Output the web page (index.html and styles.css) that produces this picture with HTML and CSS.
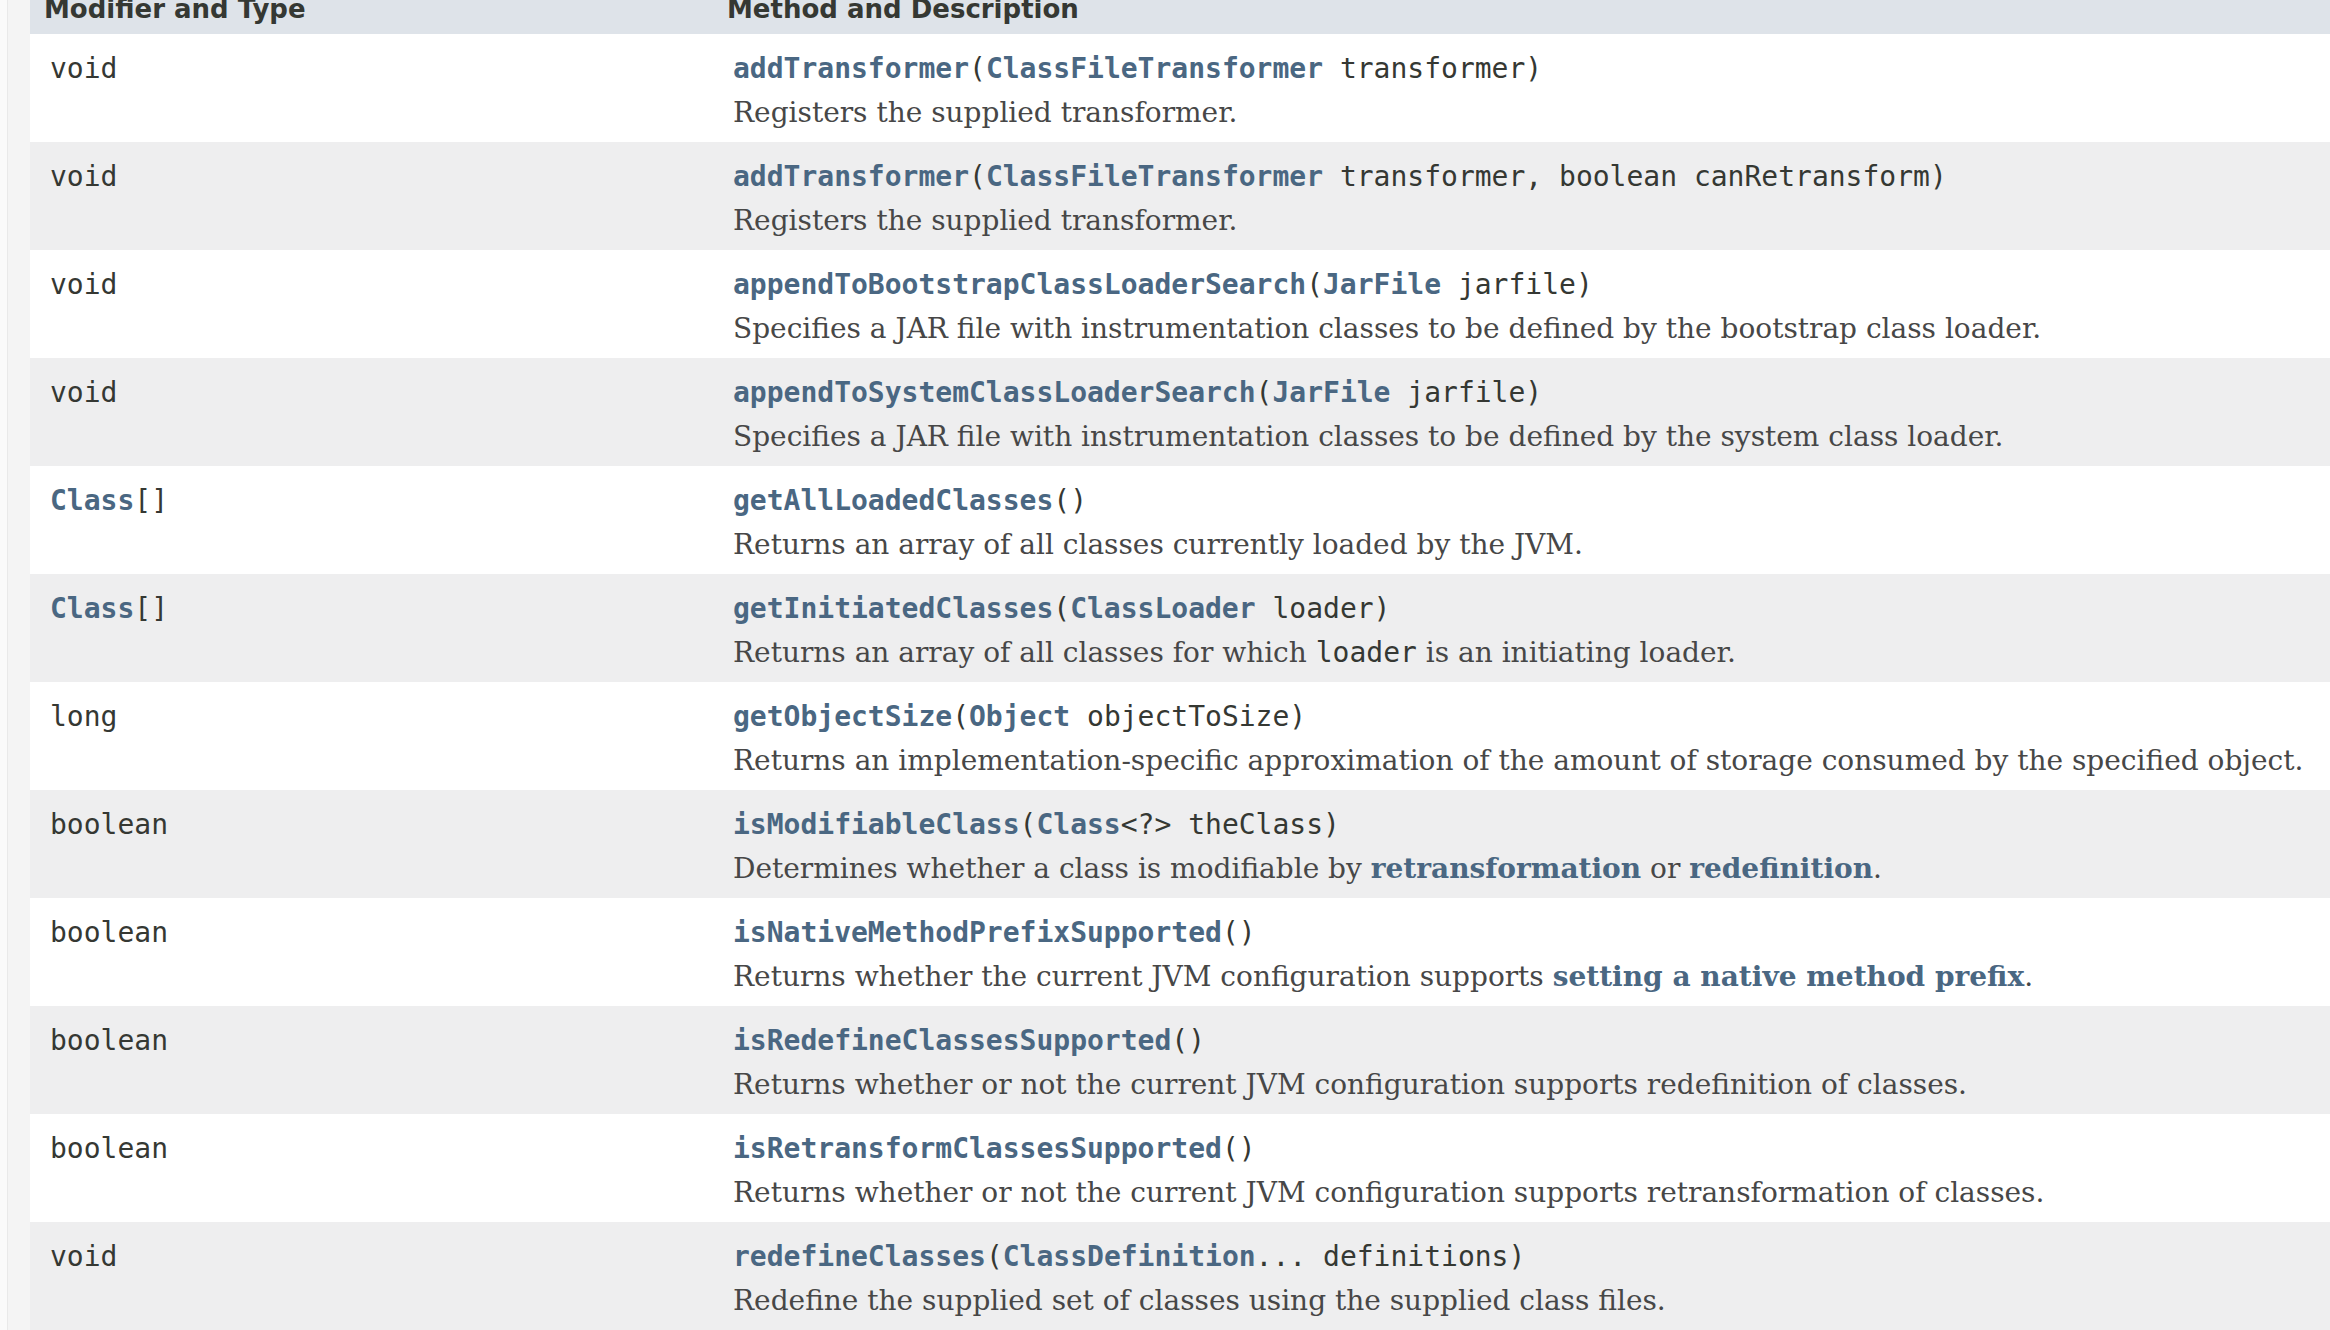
FILE: index.html
```html
<!DOCTYPE html>
<html lang="en">
<head>
<meta charset="utf-8">
<title>Instrumentation - Method Summary</title>
<link rel="stylesheet" href="styles.css">
</head>
<body>
<div class="page">
  <div class="gutter"></div>
  <div class="summary">
    <div class="row head">
      <div class="c1">Modifier and Type</div>
      <div class="c2">Method and Description</div>
    </div>

    <div class="row">
      <div class="c1"><code>void</code></div>
      <div class="c2">
        <code><a class="lnk">addTransformer</a>(<a class="lnk">ClassFileTransformer</a> transformer)</code>
        <div class="block">Registers the supplied transformer.</div>
      </div>
    </div>

    <div class="row alt">
      <div class="c1"><code>void</code></div>
      <div class="c2">
        <code><a class="lnk">addTransformer</a>(<a class="lnk">ClassFileTransformer</a> transformer, boolean canRetransform)</code>
        <div class="block">Registers the supplied transformer.</div>
      </div>
    </div>

    <div class="row">
      <div class="c1"><code>void</code></div>
      <div class="c2">
        <code><a class="lnk">appendToBootstrapClassLoaderSearch</a>(<a class="lnk">JarFile</a> jarfile)</code>
        <div class="block">Specifies a JAR file with instrumentation classes to be defined by the bootstrap class loader.</div>
      </div>
    </div>

    <div class="row alt">
      <div class="c1"><code>void</code></div>
      <div class="c2">
        <code><a class="lnk">appendToSystemClassLoaderSearch</a>(<a class="lnk">JarFile</a> jarfile)</code>
        <div class="block">Specifies a JAR file with instrumentation classes to be defined by the system class loader.</div>
      </div>
    </div>

    <div class="row">
      <div class="c1"><code><a class="lnk">Class</a>[]</code></div>
      <div class="c2">
        <code><a class="lnk">getAllLoadedClasses</a>()</code>
        <div class="block">Returns an array of all classes currently loaded by the JVM.</div>
      </div>
    </div>

    <div class="row alt">
      <div class="c1"><code><a class="lnk">Class</a>[]</code></div>
      <div class="c2">
        <code><a class="lnk">getInitiatedClasses</a>(<a class="lnk">ClassLoader</a> loader)</code>
        <div class="block">Returns an array of all classes for which <code>loader</code> is an initiating loader.</div>
      </div>
    </div>

    <div class="row">
      <div class="c1"><code>long</code></div>
      <div class="c2">
        <code><a class="lnk">getObjectSize</a>(<a class="lnk">Object</a> objectToSize)</code>
        <div class="block">Returns an implementation-specific approximation of the amount of storage consumed by the specified object.</div>
      </div>
    </div>

    <div class="row alt">
      <div class="c1"><code>boolean</code></div>
      <div class="c2">
        <code><a class="lnk">isModifiableClass</a>(<a class="lnk">Class</a>&lt;?&gt; theClass)</code>
        <div class="block">Determines whether a class is modifiable by <a class="lnk">retransformation</a> or <a class="lnk">redefinition</a>.</div>
      </div>
    </div>

    <div class="row">
      <div class="c1"><code>boolean</code></div>
      <div class="c2">
        <code><a class="lnk">isNativeMethodPrefixSupported</a>()</code>
        <div class="block">Returns whether the current JVM configuration supports <a class="lnk">setting a native method prefix</a>.</div>
      </div>
    </div>

    <div class="row alt">
      <div class="c1"><code>boolean</code></div>
      <div class="c2">
        <code><a class="lnk">isRedefineClassesSupported</a>()</code>
        <div class="block">Returns whether or not the current JVM configuration supports redefinition of classes.</div>
      </div>
    </div>

    <div class="row">
      <div class="c1"><code>boolean</code></div>
      <div class="c2">
        <code><a class="lnk">isRetransformClassesSupported</a>()</code>
        <div class="block">Returns whether or not the current JVM configuration supports retransformation of classes.</div>
      </div>
    </div>

    <div class="row alt">
      <div class="c1"><code>void</code></div>
      <div class="c2">
        <code><a class="lnk">redefineClasses</a>(<a class="lnk">ClassDefinition</a>... definitions)</code>
        <div class="block">Redefine the supplied set of classes using the supplied class files.</div>
      </div>
    </div>
  </div>
</div>
</body>
</html>
```

FILE: styles.css
```css
html, body {
  margin: 0;
  padding: 0;
  background: #fafafa;
  overflow: hidden;
}

.page {
  display: flex;
  min-height: 100vh;
}

.gutter {
  flex: none;
  width: 22px;
  margin-left: 7px;
  border-left: 1px solid #e9e9e9;
  background: #f4f4f4;
}

.summary {
  flex: 1;
  background: #ffffff;
}

.row {
  display: grid;
  grid-template-columns: 683px 1fr;
  height: 108px;
  box-sizing: border-box;
  background: #ffffff;
  white-space: nowrap;
}

.row.alt {
  background: #eeeeef;
}

.row .c1,
.row .c2 {
  padding: 19px 0 0 20px;
}

.row.head {
  height: 34px;
  background: #dee3e9;
}

.row.head .c1,
.row.head .c2 {
  padding: 0 0 0 14px;
  font-family: "DejaVu Sans", "Liberation Sans", sans-serif;
  font-weight: bold;
  font-size: 26px;
  line-height: 18px;
  color: #353833;
}

code {
  display: block;
  font-family: "DejaVu Sans Mono", "Liberation Mono", monospace;
  font-size: 28px;
  line-height: 32px;
  color: #353833;
}

.block code {
  display: inline;
}

.lnk {
  color: #4a6782;
  font-weight: bold;
  text-decoration: none;
}

.block {
  margin-top: 12px;
  font-family: "DejaVu Serif", "Liberation Serif", serif;
  font-size: 28px;
  line-height: 32px;
  color: #474747;
}
```
